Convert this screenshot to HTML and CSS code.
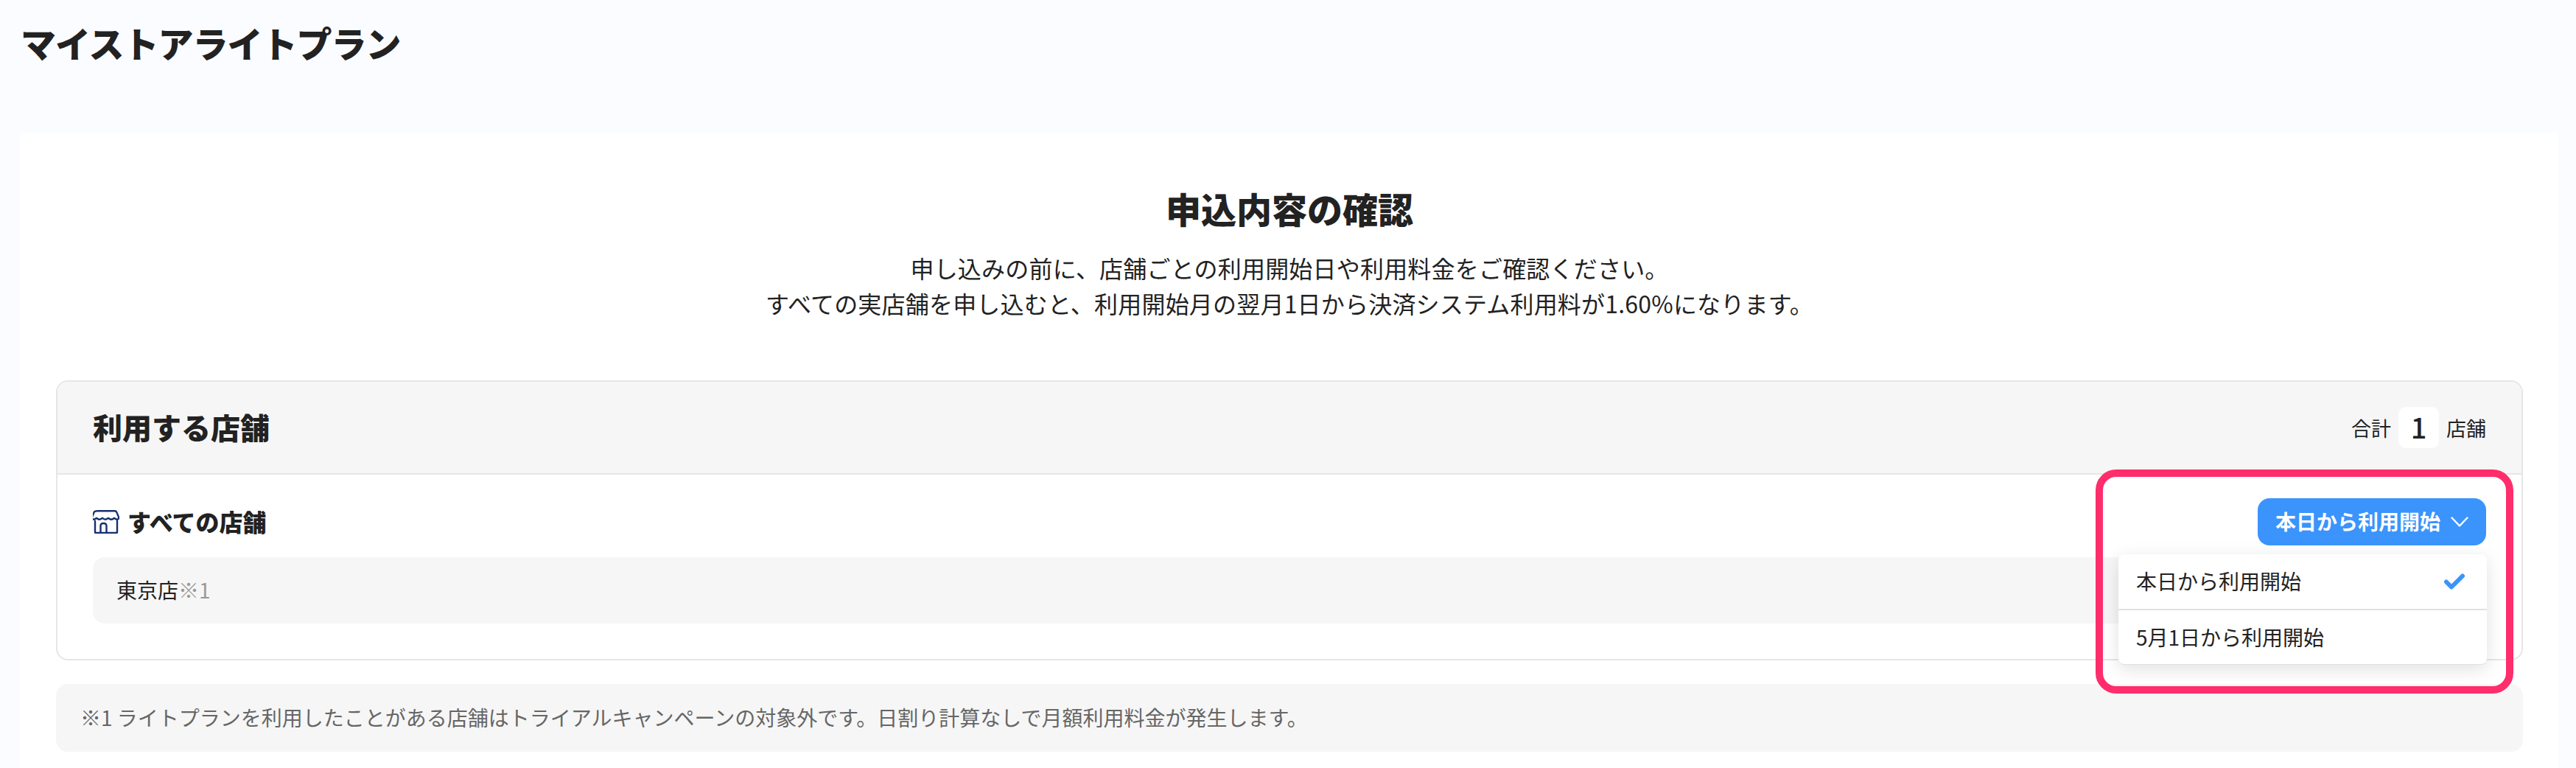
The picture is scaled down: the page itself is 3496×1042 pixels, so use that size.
FILE: index.html
```html
<!DOCTYPE html>
<html lang="ja">

<head>
  <meta charset="UTF-8">
  <title>マイストアライトプラン</title>
  <link rel="stylesheet" href="styles.css">
</head>

<body>
  <h1 class="page-title">マイストアライトプラン</h1>

  <main class="panel">
    <h2 class="confirm-title">申込内容の確認</h2>
    <p class="confirm-lead">申し込みの前に、店舗ごとの利用開始日や利用料金をご確認ください。<br>すべての実店舗を申し込むと、利用開始月の翌月1日から決済システム利用料が1.60%になります。</p>

    <section class="card">
      <div class="card-head">
        <h3 class="card-title">利用する店舗</h3>
        <div class="total">
          <span>合計</span>
          <span class="total-num">1</span>
          <span>店舗</span>
        </div>
      </div>
      <div class="card-body">
        <div class="store-row">
          <div class="store-name">
            <svg class="store-icon" viewBox="0 0 36 32" fill="none" stroke="#14306e" stroke-width="2.400" stroke-linejoin="round" stroke-linecap="round">
              <path d="M6 1.200h24c1 0 1.600.4 2 1.200l3 7v1.600c0 1-.8 1.800-2 1.800-2.200 0-3.300-1.800-4-1.800s-1.800 1.800-4 1.800-3.300-1.800-4-1.800-2 1.800-4 1.800-3.200-1.800-4-1.800-1.800 1.800-4 1.800-3.300-1.800-4-1.800-1.800 1.800-3.800 1.800c-1.200 0-2.200-.8-2.200-1.800V9.400l3-7C4.400 1.600 5 1.200 6 1.200z" />
              <path d="M3 15v15c0 .6.400 1 1 1h28c.6 0 1-.4 1-1V15" />
              <path d="M10.500 31V21.500c0-2 1.500-3.500 4-3.500s4 1.500 4 3.500V31" />
            </svg>
            <span class="store-label">すべての店舗</span>
          </div>
          <button class="start-btn" type="button">
            <span class="start-label">本日から利用開始</span>
            <svg class="chevron" viewBox="0 0 24 14" fill="none" stroke="#fff" stroke-width="2.400" stroke-linecap="round" stroke-linejoin="round">
              <path d="M1.500 1.500 12 12.500 22.500 1.500" />
            </svg>
          </button>
        </div>
        <div class="store-item">東京店<span class="mark">※1</span></div>
      </div>

      <ul class="menu">
        <li class="menu-item">
          <span class="menu-label">本日から利用開始</span>
          <svg class="check" viewBox="0 0 30 22" fill="none" stroke="#3b94fb" stroke-width="6" stroke-linecap="round" stroke-linejoin="round">
            <path d="M4 11.500 11 18.500 26 3.500" />
          </svg>
        </li>
        <li class="menu-item"><span class="menu-label">5月1日から利用開始</span></li>
      </ul>
    </section>

    <p class="note">※1 ライトプランを利用したことがある店舗はトライアルキャンペーンの対象外です。日割り計算なしで月額利用料金が発生します。</p>
  </main>

  <!-- annotation around the dropdown -->
  <div class="highlight"></div>
</body>

</html>
```

FILE: styles.css
```css
html,
body {
  height: 1042px;
  overflow: hidden;
}

body {
  position: relative;
  margin: 0;
  background: #fbfcff;
  color: #222;
  font-family: "Noto Sans CJK JP", "Noto Sans", sans-serif;
}

h1,
h2,
h3,
p,
ul {
  margin: 0;
  padding: 0;
}

.page-title {
  height: 180px;
  box-sizing: border-box;
  padding: 28px 0 0 28px;
  font-size: 48px;
  line-height: 58px;
  font-weight: 900;
  letter-spacing: -1px;
}

.panel {
  height: 862px;
  margin: 0 24px 0 27px;
  padding: 70px 48px 0 49px;
  box-sizing: border-box;
  background: #fff;
}

.confirm-title {
  font-size: 48px;
  line-height: 64px;
  font-weight: 900;
  text-align: center;
}

.confirm-lead {
  margin-top: 25px;
  font-size: 32px;
  line-height: 48px;
  letter-spacing: 0.2px;
  text-align: center;
}

.card {
  position: relative;
  margin-top: 81px;
  height: 380px;
  box-sizing: border-box;
  border: 2px solid #e6e6e6;
  border-radius: 16px;
}

.card-head {
  display: flex;
  align-items: center;
  justify-content: space-between;
  height: 124px;
  padding: 0 48px;
  background: #f6f6f6;
  border-bottom: 2px solid #e6e6e6;
  border-radius: 14px 14px 0 0;
}

.card-title {
  padding-bottom: 3px;
  font-size: 40px;
  line-height: 56px;
  font-weight: 900;
}

.total {
  display: flex;
  align-items: center;
  gap: 10px;
  font-size: 27px;
}

.total-num {
  width: 55px;
  height: 56px;
  line-height: 54px;
  text-align: center;
  font-size: 38px;
  font-weight: 500;
  background: #fff;
  border-radius: 10px;
}

.card-body {
  padding: 32px 48px 0;
}

.store-row {
  display: flex;
  align-items: center;
  justify-content: space-between;
}

.store-name {
  display: flex;
  align-items: center;
  gap: 11px;
  font-size: 32px;
  font-weight: 900;
}

.store-label {
  padding-bottom: 3px;
}

.store-icon {
  width: 36px;
  height: 32px;
}

.start-btn {
  display: flex;
  align-items: center;
  gap: 14px;
  height: 64px;
  padding: 0 24px;
  border: none;
  border-radius: 16px;
  background: #3b94fb;
  color: #fff;
  font-family: inherit;
  font-size: 28px;
  font-weight: 700;
}

.start-label {
  padding-bottom: 3px;
}

.chevron {
  width: 24px;
  height: 14px;
}

.store-item {
  margin-top: 16px;
  height: 90px;
  padding-left: 32px;
  line-height: 88px;
  font-size: 28px;
  background: #f6f6f6;
  border-radius: 16px;
}

.mark {
  color: #999;
}

.menu {
  position: absolute;
  top: 234px;
  right: 47px;
  width: 500px;
  height: 149px;
  list-style: none;
  background: #fff;
  border-radius: 8px;
  border-bottom: 1px solid #e0e0e0;
  box-shadow: 0 6px 24px rgba(0, 0, 0, 0.12);
}

.menu-item {
  display: flex;
  align-items: center;
  justify-content: space-between;
  height: 74px;
  padding: 0 29px 0 24px;
  font-size: 28px;
}

.menu-item + .menu-item {
  border-top: 2px solid #e0e0e0;
}

.menu-label {
  padding-bottom: 3px;
}

.check {
  width: 30px;
  height: 22px;
}

.note {
  margin-top: 32px;
  height: 92px;
  padding-left: 33px;
  line-height: 90px;
  font-size: 28px;
  color: #666;
  background: #f6f6f6;
  border-radius: 16px;
}

.highlight {
  position: absolute;
  left: 2844px;
  top: 637px;
  width: 567px;
  height: 304px;
  box-sizing: border-box;
  border: 10px solid #ff2d6b;
  border-radius: 28px;
  pointer-events: none;
}
```
